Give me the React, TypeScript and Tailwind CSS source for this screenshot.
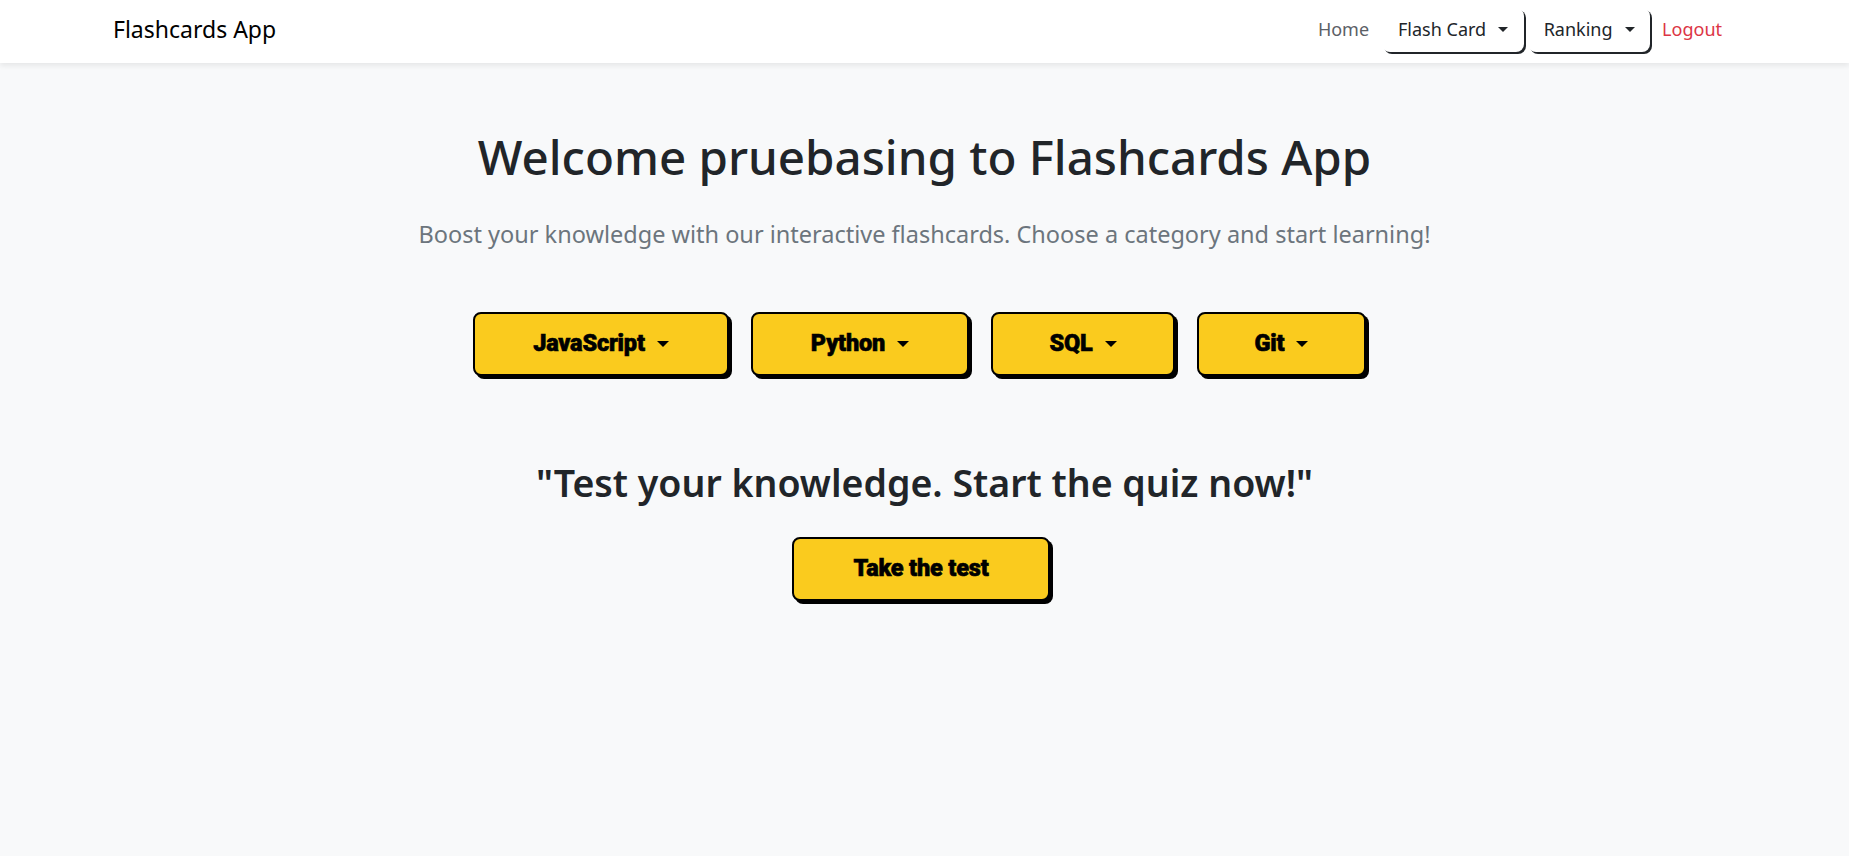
import React from "react";

function Caret({ size = 6, color = "border-t-black" }: { size?: number; color?: string }) {
  return (
    <span
      className={`inline-block h-0 w-0 border-x-transparent ${color} ${
        size === 6 ? "border-x-[6px] border-t-[6px]" : "border-x-[5px] border-t-[5px]"
      }`}
    />
  );
}

function NavDropdown({ label, width }: { label: string; width: string }) {
  return (
    <button
      className={`${width} h-[44px] flex items-center justify-center rounded-lg bg-white text-[18px] text-[#212529] shadow-[2px_2px_0_#212529]`}
    >
      <span>{label}</span>
      <span className="ml-[12px] flex items-center">
        <Caret size={5} color="border-t-[#212529]" />
      </span>
    </button>
  );
}

const heavy =
  "text-[23.5px] font-black text-black [-webkit-text-stroke:0.6px_black] tracking-[-0.2px]";

function CategoryButton({ label, width }: { label: string; width: string }) {
  return (
    <button
      className={`${width} h-[64px] flex items-center justify-center rounded-lg border-2 border-black bg-[#facb1e] shadow-[3px_3px_0_#000] ${heavy}`}
      style={{ fontFamily: "Roboto, 'Noto Sans', sans-serif" }}
    >
      <span>{label}</span>
      <span className="ml-[12px] flex items-center">
        <Caret />
      </span>
    </button>
  );
}

export default function App() {
  return (
    <div
      className="min-h-screen bg-[#f8f9fa] text-[#212529]"
      style={{ fontFamily: "'Noto Sans', 'Open Sans', sans-serif" }}
    >
      <nav className="relative z-10 flex h-[63px] items-center justify-between bg-white pb-[4px] pl-[113px] pr-[127px] shadow-[0_3px_5px_rgba(0,0,0,0.07)]">
        <a className="text-[23px] text-black">Flashcards App</a>
        <div className="flex items-center">
          <a className="text-[18px] text-[#5b6066]">Home</a>
          <div className="ml-[13px]">
            <NavDropdown label="Flash Card" width="w-[142px]" />
          </div>
          <div className="ml-[4px]">
            <NavDropdown label="Ranking" width="w-[122px]" />
          </div>
          <a className="ml-[12px] text-[18px] text-[#dc3545]">Logout</a>
        </div>
      </nav>

      <main className="flex flex-col items-center pt-[70px]">
        <h1 className="text-[47.5px] leading-none font-medium">Welcome pruebasing to Flashcards App</h1>
        <p className="mt-[42px] text-[23.5px] leading-none text-[#6c757d]">
          Boost your knowledge with our interactive flashcards. Choose a category and start learning!
        </p>

        <div className="mt-[66px] flex gap-[22px] pr-[10px]">
          <CategoryButton label="JavaScript" width="w-[256px]" />
          <CategoryButton label="Python" width="w-[218px]" />
          <CategoryButton label="SQL" width="w-[184px]" />
          <CategoryButton label="Git" width="w-[169px]" />
        </div>

        <h2 className="mt-[88px] text-[37.5px] leading-none font-semibold">
          "Test your knowledge. Start the quiz now!"
        </h2>

        <div className="mt-[35px] pr-[7px]">
          <button
            className={`flex h-[64px] w-[258px] items-center justify-center rounded-lg border-2 border-black bg-[#facb1e] shadow-[3px_3px_0_#000] ${heavy}`}
            style={{ fontFamily: "Roboto, 'Noto Sans', sans-serif" }}
          >
            Take the test
          </button>
        </div>
      </main>
    </div>
  );
}
